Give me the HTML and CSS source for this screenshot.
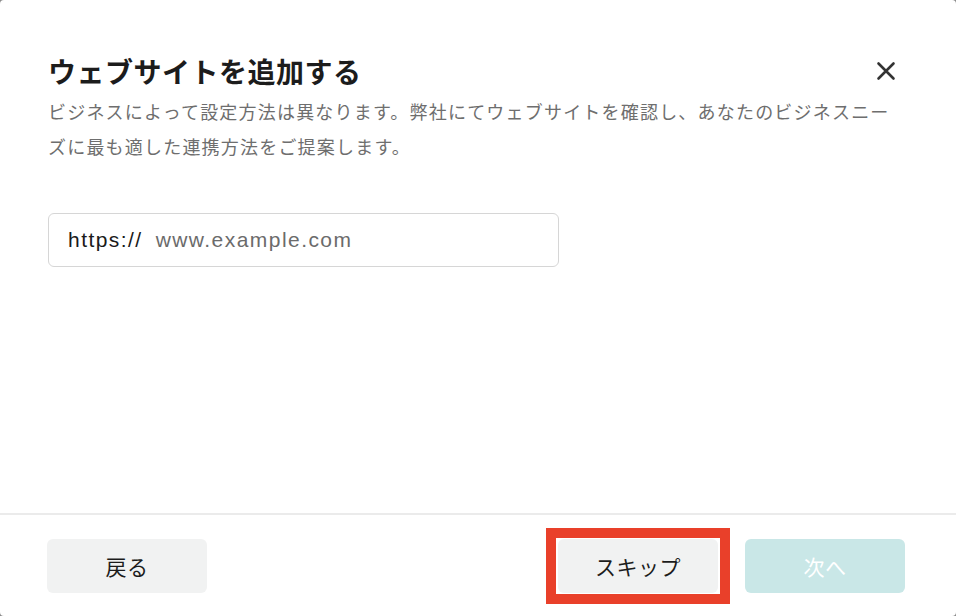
FILE: index.html
```html
<!DOCTYPE html>
<html lang="ja">
<head>
<meta charset="utf-8">
<title>ウェブサイトを追加する</title>
<link rel="stylesheet" href="styles.css">
</head>
<body>
<div class="modal">
  <div class="modal-body">
    <div class="header">
      <h1 class="title">ウェブサイトを追加する</h1>
      <button class="close" aria-label="閉じる">
        <svg width="20" height="20" viewBox="0 0 20 20"><path d="M2.5 2.5 L17.5 17.5 M17.5 2.5 L2.5 17.5" stroke="#333" stroke-width="2.6" stroke-linecap="round" fill="none"/></svg>
      </button>
    </div>
    <p class="desc">ビジネスによって設定方法は異なります。弊社にてウェブサイトを確認し、あなたのビジネスニーズに最も適した連携方法をご提案します。</p>
    <div class="url-field">
      <span class="prefix">https://</span>
      <span class="placeholder">www.example.com</span>
    </div>
  </div>
  <div class="footer">
    <button class="btn btn-grey">戻る</button>
    <div class="actions">
      <span class="highlight"><button class="btn btn-grey">スキップ</button></span>
      <button class="btn btn-next">次へ</button>
    </div>
  </div>
</div>
</body>
</html>
```
FILE: styles.css
```css
html, body {
  margin: 0;
  padding: 0;
  background: #8a8a8a;
}
body {
  font-family: "Noto Sans CJK JP", "Noto Sans", sans-serif;
}
.modal {
  width: 956px;
  height: 616px;
  background: #fff;
  border-radius: 4px;
  display: flex;
  flex-direction: column;
  box-sizing: border-box;
}
.modal-body {
  flex: 1;
  padding: 53px 51px 0 48px;
}
.header {
  display: flex;
  align-items: center;
  justify-content: space-between;
}
.title {
  margin: 0;
  font-size: 28px;
  line-height: 36px;
  font-weight: 700;
  letter-spacing: 0.5px;
  color: #1c1c1c;
}
.close {
  border: 0;
  background: none;
  padding: 0;
  width: 20px;
  height: 20px;
  margin-right: 9px;
  display: flex;
}
.desc {
  margin: 5px 0 0;
  font-size: 18px;
  line-height: 35px;
  letter-spacing: 1.2px;
  color: #6e6e6e;
}
.url-field {
  margin-top: 49px;
  width: 511px;
  height: 54px;
  box-sizing: border-box;
  border: 1px solid #d6d6d6;
  border-radius: 6px;
  display: flex;
  align-items: center;
  padding-left: 19px;
  font-family: "Liberation Sans", Arial, sans-serif;
  font-size: 21px;
  letter-spacing: 1.45px;
}
.prefix {
  color: #1a1a1a;
}
.placeholder {
  margin-left: 13px;
  color: #6b6b6b;
}
.footer {
  border-top: 2px solid #ebebeb;
  padding: 24px 51px 23px 47px;
  display: flex;
  justify-content: space-between;
  align-items: center;
}
.actions {
  display: flex;
  align-items: center;
  gap: 27px;
}
.btn {
  width: 160px;
  height: 54px;
  border: 0;
  border-radius: 6px;
  font-family: "Noto Sans CJK JP", "Noto Sans", sans-serif;
  font-size: 21px;
  letter-spacing: 0.5px;
  color: #1c1c1c;
  padding: 0;
}
.btn-grey {
  background: #f1f2f2;
}
.btn-next {
  background: #c9e7e7;
  color: #fff;
}
.highlight {
  position: relative;
  display: flex;
}
.highlight::after {
  content: "";
  position: absolute;
  top: -11px;
  bottom: -11px;
  left: -12px;
  right: -12px;
  border: 10px solid #e9402a;
  pointer-events: none;
}
```
